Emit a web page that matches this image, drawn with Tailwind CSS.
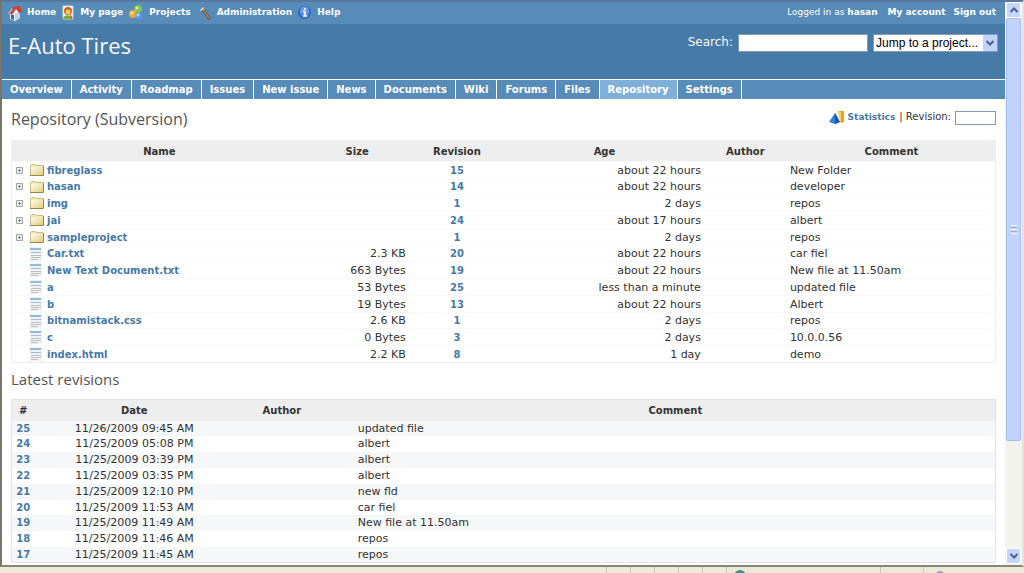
<!DOCTYPE html>
<html lang="en">

<head>
    <meta charset="UTF-8">
    <meta name="viewport" content="width=device-width, initial-scale=1.0">
    <title>E-Auto Tires - Repository</title>
    <script src="https://cdn.jsdelivr.net/npm/@tailwindcss/browser@4"></script>
</head>

<body class="flex h-screen flex-col overflow-hidden bg-white font-['DejaVu_Sans','Verdana',sans-serif] text-[11px] text-[#333]">
    <svg class="absolute size-0">
        <symbol id="icon-folder" viewBox="0 0 16 14">
            <path d="M1.500 2.500 2.500 1.500h4l1 1h6.500v10H1.500z" fill="#f3e8b4" stroke="#c9bd88" />
            <path d="M2 4h12v8H2z" fill="url(#folder-fill)" />
            <path d="M1 12.500h13.500V3" fill="none" stroke="#97884a" />
        </symbol>
        <symbol id="icon-file" viewBox="0 0 12 14">
            <path d="M0 0h12v14H0z" fill="#eef2f4" />
            <path d="M0 1h11v2H0z" fill="#93bbd6" />
            <path d="M1 5.500h10" stroke="#a6bccb" />
            <path d="M1 8.500h10M1 10.500h10M1 12.500h7" stroke="#c0c0c2" />
        </symbol>
        <symbol id="icon-plus" viewBox="0 0 7 7">
            <path d="M.5.5h6v6h-6z" fill="#eee" stroke="#a2a2a2" />
            <path d="M2 3.500h3M3.500 2v3" stroke="#8a8a8a" />
        </symbol>
        <linearGradient id="folder-fill" x2="1" y2="1">
            <stop offset="0" stop-color="#fffdec" />
            <stop offset="1" stop-color="#e3cd7c" />
        </linearGradient>
    </svg>

    <div class="flex min-h-0 flex-1 border-t-2 border-r-2 border-b-2 border-l-2 border-t-[#56789a] border-r-[#e4e4de] border-b-[#85857a] border-l-[#77766d]">
        <div class="min-w-0 flex-1 overflow-hidden">
            <div class="flex h-[22px] items-center justify-between bg-[#578bb8] pr-[9px] pl-[5px] text-[9px] font-bold text-white">
                <nav class="flex gap-[6px]">
                    <a href="#" class="flex items-center gap-[5px]">
                        <svg class="h-4 w-[15px]" viewBox="0 0 15 16">
                            <path d="M3 8v6l5 2 5-3V7L8 3z" fill="#eef3fa" />
                            <path d="M8 16V9l5-3v7z" fill="#c4d2e6" />
                            <path d="m1 8 5-6 7-1 2 6-3 1-3-4-4 6z" fill="#d3402a" />
                            <path d="m1 8 4-5 1 1-4 6z" fill="#8fb5ea" />
                            <path d="M4 10h3v5l-3-1z" fill="#3767a8" />
                        </svg>
                        Home
                    </a>
                    <a href="#" class="flex items-center gap-[6px]">
                        <svg class="h-4 w-3" viewBox="0 0 12 16">
                            <path d="M1 1h10v13H1z" fill="#f8faf4" stroke="#cfd9dd" />
                            <circle cx="6" cy="6" r="4" fill="#c8641f" />
                            <circle cx="6" cy="7" r="2.500" fill="#ffc65c" />
                            <path d="M1 14c0-5 9-5 9 0z" fill="#7cab42" />
                            <path d="m8 9 3 4-2 1z" fill="#d85a23" />
                        </svg>
                        My page
                    </a>
                    <a href="#" class="flex items-center gap-[6px]">
                        <svg class="h-4 w-[14px]" viewBox="0 0 14 16">
                            <circle cx="9" cy="4" r="4" fill="#80c455" />
                            <circle cx="8" cy="3" r="1.500" fill="#c9eeaa" />
                            <circle cx="4" cy="9" r="4" fill="#eba735" />
                            <circle cx="3" cy="8" r="1.500" fill="#ffe6a4" />
                            <circle cx="10" cy="11" r="3.500" fill="#5d96e5" />
                            <circle cx="9" cy="10" r="1.500" fill="#b7d6ff" />
                        </svg>
                        Projects
                    </a>
                    <a href="#" class="flex items-center gap-[5px]">
                        <svg class="h-4 w-[15px]" viewBox="0 0 15 16">
                            <path d="m6 5 6 8" stroke="#795a41" stroke-width="3" stroke-linecap="round" />
                            <path d="m6 5 6 8" stroke="#c99a6d" />
                            <path d="M2 6 5 2h3L7 5 4 6 3 7z" fill="#cbd0d5" stroke="#65717d" stroke-width=".7" />
                        </svg>
                        Administration
                    </a>
                    <a href="#" class="flex items-center gap-[6px]">
                        <svg class="h-4 w-[13px]" viewBox="0 0 13 16">
                            <circle cx="6.500" cy="7.500" r="6" fill="#3876d8" stroke="#2c60b4" />
                            <circle cx="6.500" cy="6" r="4.500" fill="#669bea" />
                            <path d="M5 6.500h2V11m-2 0h4M6 4h2" fill="none" stroke="#fff" stroke-width="1.500" />
                        </svg>
                        Help
                    </a>
                </nav>
                <div class="flex">
                    <span class="font-normal">Logged in as <a href="#" class="font-bold">hasan</a></span>
                    <a href="#" class="ml-[10px]">My account</a>
                    <a href="#" class="ml-2">Sign out</a>
                </div>
            </div>

            <header class="flex h-[55px] justify-between bg-[#467aa7] pr-[7px] pl-[6px] text-[#f8f8f8]">
                <h1 class="pt-[5px] font-['Open_Sans','Trebuchet_MS',sans-serif] text-[22px] leading-8 font-medium">E-Auto Tires</h1>
                <form class="mt-[10px] flex h-[18px] gap-[5px]">
                    <label for="search" class="text-xs leading-4">Search:</label>
                    <input id="search" type="text" class="w-[130px] border border-[#7f9db9] bg-white text-black">
                    <div class="relative">
                        <select aria-label="Jump to a project" class="h-[18px] w-[125px] appearance-none border border-[#7f9db9] bg-white pl-[2px] font-['Liberation_Sans',Arial,sans-serif] text-xs leading-4 text-black">
                            <option>Jump to a project...</option>
                        </select>
                        <svg class="pointer-events-none absolute top-[1px] right-[1px] h-4 w-[14px]" viewBox="0 0 14 16">
                            <rect width="14" height="16" rx="1" fill="#c1d3fb" />
                            <path d="m3.500 6 3.500 3.500L10.500 6" fill="none" stroke="#4d6185" stroke-width="2" />
                        </svg>
                    </div>
                </form>
            </header>

            <nav class="flex h-5 border-t border-white bg-[#578bb8] text-[10px] leading-[19px] font-bold text-white">
                <a href="#" class="border-r border-white px-2">Overview</a>
                <a href="#" class="border-r border-white px-2">Activity</a>
                <a href="#" class="border-r border-white px-2">Roadmap</a>
                <a href="#" class="border-r border-white px-2">Issues</a>
                <a href="#" class="border-r border-white px-2">New issue</a>
                <a href="#" class="border-r border-white px-2">News</a>
                <a href="#" class="border-r border-white px-2">Documents</a>
                <a href="#" class="border-r border-white px-2">Wiki</a>
                <a href="#" class="border-r border-white px-2">Forums</a>
                <a href="#" class="border-r border-white px-2">Files</a>
                <a href="#" class="border-r border-white bg-[#80b0da] px-2">Repository</a>
                <a href="#" class="border-r border-white px-2">Settings</a>
            </nav>

            <main class="px-[9px]">
                <div class="flex h-[41px] items-start justify-between">
                    <h2 class="pt-2 font-['Open_Sans','Trebuchet_MS',sans-serif] text-[16px] leading-6 font-medium text-[#555]">Repository (Subversion)</h2>
                    <form class="mt-[10px] flex h-4 items-center text-[10px] leading-4">
                        <svg class="mr-1 h-4 w-[15px]" viewBox="0 0 15 16">
                            <path d="m0 13 6-9 5 9-5 2z" fill="#2f7fdb" />
                            <path d="m6 4 5 9-5 2z" fill="#1c55a8" />
                            <path d="M9 2h6v11l-3 1z" fill="#f0a020" />
                            <path d="m9 2 3 1v11l-1-1z" fill="#ffd257" />
                        </svg>
                        <a href="#" class="text-[9px] font-bold text-[#467aa7]">Statistics</a>
                        <label for="rev" class="px-1">| Revision:</label>
                        <input id="rev" type="text" class="h-[14px] w-[41px] self-end border border-[#7f9db9]">
                    </form>
                </div>

                <table class="w-full table-fixed border border-[#eee]">
                    <thead class="text-[10px]">
                        <tr class="h-[21px] bg-[#eee]">
                            <th class="w-[30%]">Name</th>
                            <th class="w-[101px]">Size</th>
                            <th class="w-[10%]">Revision</th>
                            <th class="w-[20%]">Age</th>
                            <th class="w-[85px]">Author</th>
                            <th>Comment</th>
                        </tr>
                    </thead>
                    <tbody id="entries" class="leading-[15px]"></tbody>
                </table>

                <h3 class="pt-[5px] pb-[9px] font-['Open_Sans','Trebuchet_MS',sans-serif] text-[15px] leading-[22px] font-medium text-[#555]">Latest revisions</h3>

                <table class="w-full table-fixed border border-[#e4e4e4]">
                    <thead class="text-[10px]">
                        <tr class="h-[21px] bg-[#eee]">
                            <th class="w-[23px]">#</th>
                            <th class="w-[26px]"></th>
                            <th class="w-[15%]">Date</th>
                            <th class="w-[15%]">Author</th>
                            <th>Comment</th>
                        </tr>
                    </thead>
                    <tbody id="revisions" class="leading-[15px]"></tbody>
                </table>
            </main>
        </div>

        <div class="flex w-[17px] flex-col bg-[#f3f3ee] px-[1px]">
            <button aria-label="Scroll up" class="flex h-4 w-full items-center justify-center rounded-[2px] border border-white bg-[#c6d5fd]">
                <svg class="h-2 w-[10px]" viewBox="0 0 10 8"><path d="m1.500 6 3.500-3.500L8.500 6" fill="none" stroke="#4d6185" stroke-width="2" /></svg>
            </button>
            <div class="flex h-[423px] flex-col items-center justify-center gap-[1px] rounded-[2px] border border-[#a9bdf0] bg-[#c2d3fd]">
                <i class="h-[1px] w-[6px] bg-white"></i>
                <i class="h-[1px] w-[6px] bg-[#8cb0f8]"></i>
                <i class="h-[1px] w-[6px] bg-white"></i>
                <i class="h-[1px] w-[6px] bg-[#8cb0f8]"></i>
                <i class="h-[1px] w-[6px] bg-white"></i>
            </div>
            <button aria-label="Scroll down" class="mt-auto mb-[1px] flex h-4 w-full items-center justify-center rounded-[2px] border border-white bg-[#c6d5fd]">
                <svg class="h-2 w-[10px]" viewBox="0 0 10 8"><path d="m1.500 2 3.500 3.500L8.500 2" fill="none" stroke="#4d6185" stroke-width="2" /></svg>
            </button>
        </div>
    </div>

    <footer class="flex h-[6px] justify-end overflow-hidden bg-[#ece9d8]">
        <span class="w-6 border-l border-[#cdc9b5]"></span>
        <span class="w-6 border-l border-[#cdc9b5]"></span>
        <span class="w-6 border-l border-[#cdc9b5]"></span>
        <span class="w-6 border-l border-[#cdc9b5]"></span>
        <span class="w-6 border-l border-[#cdc9b5]"></span>
        <span class="w-[154px] border-l border-[#cdc9b5] pt-[3px] pl-[7px]"><i class="block size-3 rounded-full bg-[#3f8f8c]"></i></span>
        <span class="w-[43px] border-l border-[#cdc9b5]"></span>
        <span class="w-[101px] border-l border-[#cdc9b5] pt-1 pl-3"><i class="block size-2 rounded-full bg-[#8fa3c4]"></i></span>
    </footer>

    <script>
        // name, size, revision, age, comment (no size = folder)
        const entries = [
            ['fibreglass', '', 15, 'about 22 hours', 'New Folder'],
            ['hasan', '', 14, 'about 22 hours', 'developer'],
            ['img', '', 1, '2 days', 'repos'],
            ['jai', '', 24, 'about 17 hours', 'albert'],
            ['sampleproject', '', 1, '2 days', 'repos'],
            ['Car.txt', '2.3 KB', 20, 'about 22 hours', 'car fiel'],
            ['New Text Document.txt', '663 Bytes', 19, 'about 22 hours', 'New file at 11.50am'],
            ['a', '53 Bytes', 25, 'less than a minute', 'updated file'],
            ['b', '19 Bytes', 13, 'about 22 hours', 'Albert'],
            ['bitnamistack.css', '2.6 KB', 1, '2 days', 'repos'],
            ['c', '0 Bytes', 3, '2 days', '10.0.0.56'],
            ['index.html', '2.2 KB', 8, '1 day', 'demo']
        ];

        const revisions = [
            [25, '11/26/2009 09:45 AM', 'updated file'],
            [24, '11/25/2009 05:08 PM', 'albert'],
            [23, '11/25/2009 03:39 PM', 'albert'],
            [22, '11/25/2009 03:35 PM', 'albert'],
            [21, '11/25/2009 12:10 PM', 'new fld'],
            [20, '11/25/2009 11:53 AM', 'car fiel'],
            [19, '11/25/2009 11:49 AM', 'New file at 11.50am'],
            [18, '11/25/2009 11:46 AM', 'repos'],
            [17, '11/25/2009 11:45 AM', 'repos']
        ];

        document.getElementById('entries').innerHTML = entries.map(([name, size, rev, age, comment]) => `
            <tr class="h-[17px] border-t border-[#f8f8f8] nth-[4n+2]:h-4">
                <td class="p-0">
                    <div class="flex h-[15px] items-center pl-1">
                        <span class="w-[13px]">${size ? '' : '<svg class="size-[7px]"><use href="#icon-plus" /></svg>'}</span>
                        <span class="w-[18px]">${size
                            ? '<svg class="ml-[1px] h-[14px] w-3"><use href="#icon-file" /></svg>'
                            : '<svg class="h-[14px] w-4"><use href="#icon-folder" /></svg>'}</span>
                        <a href="#" class="text-[10px] font-bold text-[#467aa7]">${name}</a>
                    </div>
                </td>
                <td class="pr-[2px] text-right">${size}</td>
                <td class="text-center text-[10px]"><a href="#" class="font-bold text-[#467aa7]">${rev}</a></td>
                <td class="pr-[2px] text-right">${age}</td>
                <td></td>
                <td class="pl-[2px]">${comment}</td>
            </tr>`).join('');

        document.getElementById('revisions').innerHTML = revisions.map(([rev, date, comment]) => `
            <tr class="h-4 odd:bg-[#f6f7f8] nth-[5n+1]:h-[15px]">
                <td class="text-center text-[10px]"><a href="#" class="font-bold text-[#467aa7]">${rev}</a></td>
                <td></td>
                <td class="text-center">${date}</td>
                <td></td>
                <td class="pl-[2px]">${comment}</td>
            </tr>`).join('');
    </script>
</body>

</html>
